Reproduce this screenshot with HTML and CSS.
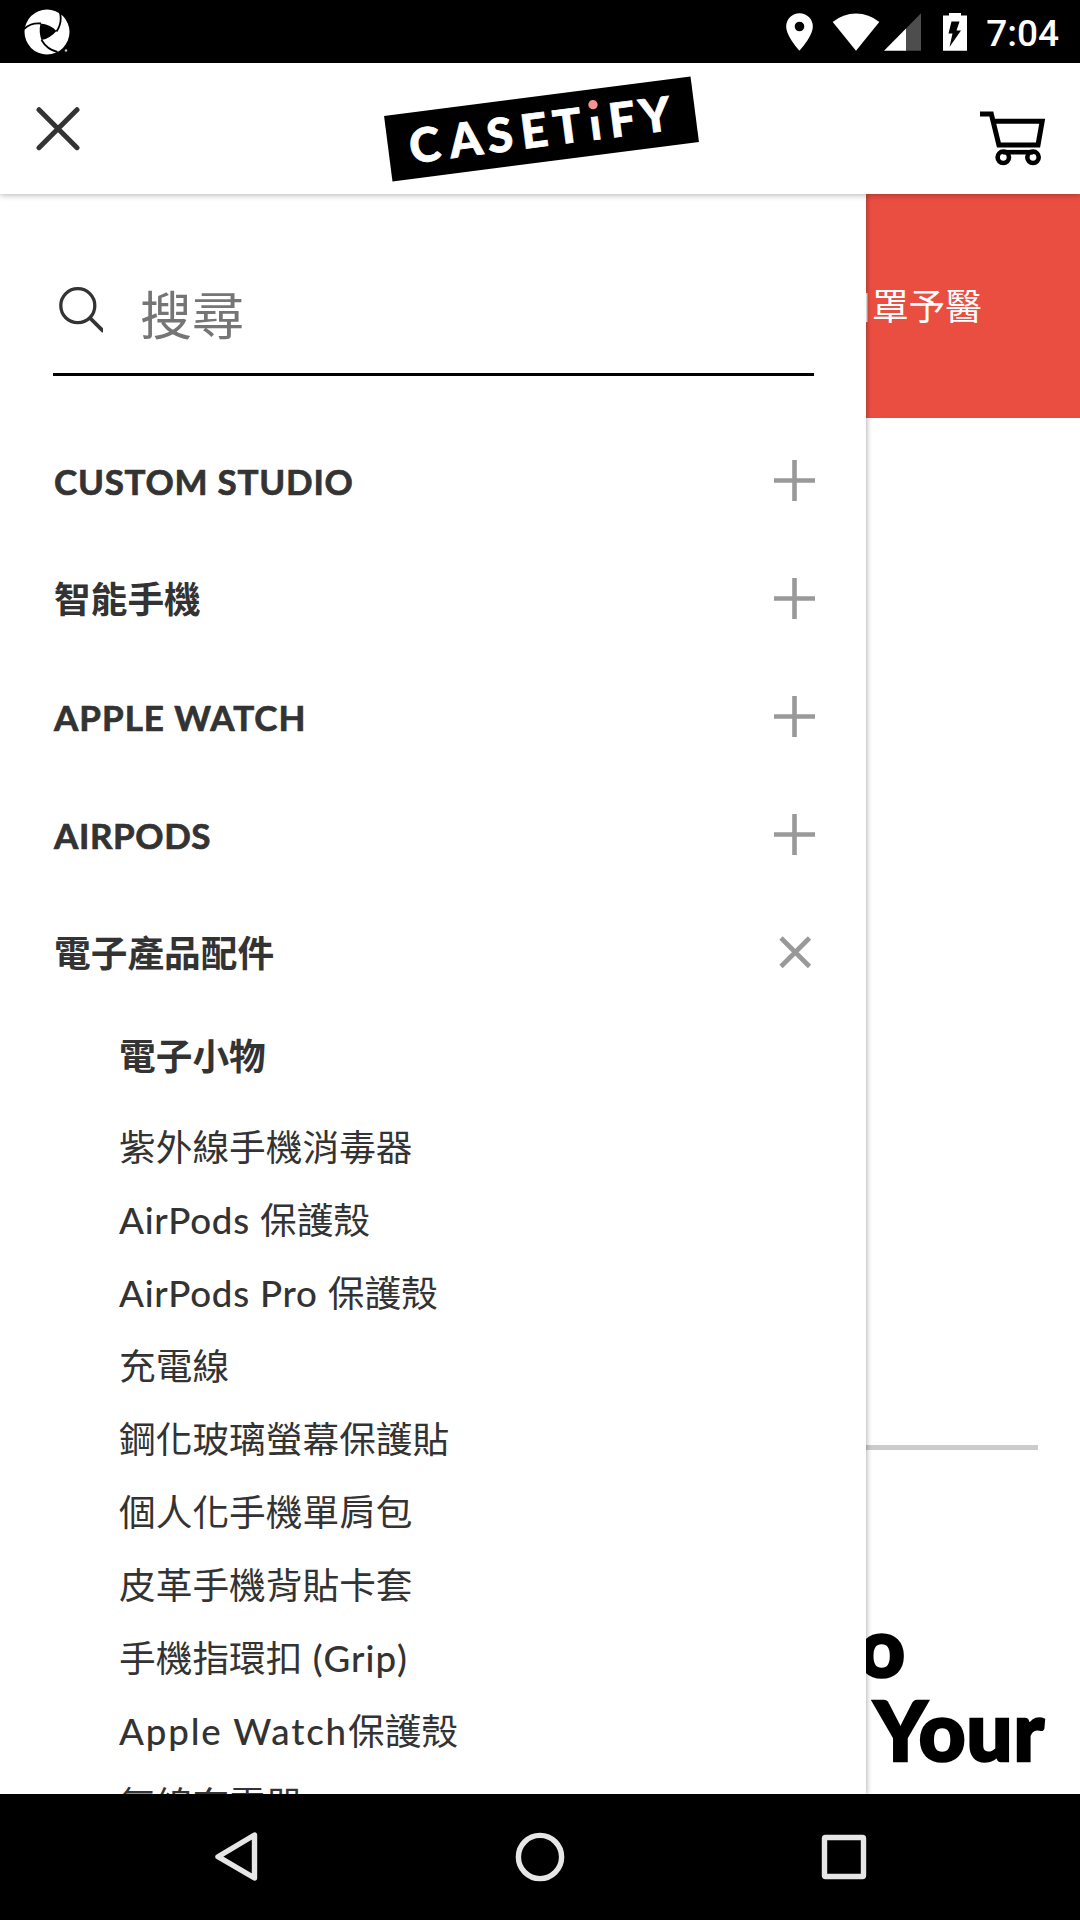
FILE: index.html
```html
<!DOCTYPE html>
<html lang="zh-Hant">
<head>
<meta charset="utf-8">
<title>CASETiFY</title>
<link rel="stylesheet" href="styles.css">
</head>
<body>
<div class="screen">
  <div class="status">
    <svg class="status-app" width="46" height="46" viewBox="0 0 46 46">
      <circle cx="23" cy="23" r="22.5" fill="#fff"/>
      <path d="M16.500 14.500Q26 15 32.500 22Q26 29.500 17.500 31Q14.500 23 16.500 14.500Z" fill="#000"/>
      <path d="M0 20Q7 13.500 17 14.500M35.500 2Q39 13 32.500 22.500M17.500 31Q23 40.500 33.500 43" fill="none" stroke="#000" stroke-width="1.800"/>
      <circle cx="42" cy="41.500" r="1.200" fill="#ccc"/>
    </svg>
    <div class="status-right">
      <svg width="182" height="38" viewBox="785 12.500 182 38">
        <path fill="#fff" fill-rule="evenodd" d="M799.500 12.700a13.300 13.300 0 0 0-13.300 13.300c0 10 13.300 24.200 13.300 24.200s13.300-14.200 13.300-24.200a13.300 13.300 0 0 0-13.300-13.300zm0 8.500a4.800 4.800 0 1 1 0 9.600a4.800 4.800 0 0 1 0-9.600z"/>
        <path fill="#fff" d="M832.700 21.500Q843 13 856 13T879.300 21.500L856 50.200Z"/>
        <path fill="#4d4d4d" d="M906 28v22.200h15V12.700z"/>
        <path fill="#fff" d="M884 50.200h22V28z"/>
        <path fill="#fff" d="M949 12.300h12v2.700h6v35.200h-24V15h6z"/>
        <path fill="#000" d="M951.500 21h8l-3 9h4.500l-11.500 16.500 3-13.500h-4z"/>
      </svg>
      <span class="clock">7:04</span>
    </div>
  </div>

  <header class="header">
    <svg class="close" width="44" height="44" viewBox="36 107 44 44"><path d="M39 109.700L77 147.700M77 109.700L39 147.700" stroke="#333" stroke-width="5" stroke-linecap="round"/></svg>
    <div class="logo">
      <svg width="309" height="66" viewBox="-154 -33 309 66">
        <g class="logo-text">
          <text y="17.500" x="-117.300 -76.200 -41.700 -7.100 26.600 54.300 81.600 114.700">CASET<tspan class="logo-i">i</tspan>FY</text>
        </g>
        <rect x="46" y="-24" width="17" height="18" fill="#000"/>
        <circle cx="54.700" cy="-17.600" r="4.700" fill="#f79292"/>
      </svg>
    </div>
    <svg class="cart" width="66" height="56" viewBox="980 110 66 56" fill="none" stroke="#000">
      <path stroke-width="5" d="M980 114H991.300L998.900 145H1038L1042.200 121.300H993"/>
      <g stroke-width="4.600"><circle cx="1003.300" cy="157.300" r="5.700"/><circle cx="1033" cy="157.300" r="5.700"/><path d="M1003 152.200H1033"/></g>
    </svg>
  </header>

  <div class="stage">
    <main class="page">
      <div class="banner">口罩予醫</div>
      <hr class="rule">
      <h1 class="headline"><span class="line-one">o</span><span>Your</span></h1>
    </main>

    <nav class="drawer">
      <div class="search">
        <svg width="50" height="50" viewBox="53 283 50 50" fill="none" stroke="#333" stroke-linecap="round"><circle cx="77.800" cy="305.700" r="17" stroke-width="3.300"/><path stroke-width="3.800" d="M90.500 318.500L102.500 330.500"/></svg>
        <span>搜尋</span>
      </div>
      <ul class="menu">
        <li><span class="caps caps-studio">CUSTOM STUDIO</span><svg class="plus" viewBox="0 0 41 41"><path d="M20.500 0V41M0 20.500H41"/></svg></li>
        <li><span>智能手機</span><svg class="plus" viewBox="0 0 41 41"><path d="M20.500 0V41M0 20.500H41"/></svg></li>
        <li><span class="caps caps-watch">APPLE WATCH</span><svg class="plus" viewBox="0 0 41 41"><path d="M20.500 0V41M0 20.500H41"/></svg></li>
        <li><span class="caps caps-pods">AIRPODS</span><svg class="plus" viewBox="0 0 41 41"><path d="M20.500 0V41M0 20.500H41"/></svg></li>
        <li><span>電子產品配件</span><svg class="plus" viewBox="0 0 41 41"><path d="M7 6L35.500 34.500M35.500 6L7 34.500"/></svg></li>
      </ul>
      <h2 class="sub-title">電子小物</h2>
      <ul class="sub">
        <li>紫外線手機消毒器</li>
        <li><span class="lat">AirPods </span>保護殼</li>
        <li><span class="lat">AirPods Pro </span>保護殼</li>
        <li>充電線</li>
        <li>鋼化玻璃螢幕保護貼</li>
        <li>個人化手機單肩包</li>
        <li>皮革手機背貼卡套</li>
        <li>手機指環扣<span class="lat lat-grip"> (Grip)</span></li>
        <li><span class="lat lat-watch">Apple Watch</span>保護殼</li>
        <li>無線充電器</li>
      </ul>
    </nav>
  </div>

  <div class="navbar">
    <svg width="50" height="54" viewBox="211 1830 50 54"><path d="M254.500 1835V1878L218 1856.700Z"/></svg>
    <svg width="54" height="54" viewBox="513 1830 54 54"><circle cx="540" cy="1857" r="21.600"/></svg>
    <svg width="50" height="54" viewBox="819 1830 50 54"><rect x="824.500" y="1837.500" width="39" height="39" rx="1"/></svg>
  </div>
</div>
</body>
</html>
```
FILE: styles.css
```css
* { box-sizing: border-box; }
body, h1, h2, ul { margin: 0; padding: 0; }
ul { list-style: none; }
svg { display: block; flex: none; }

.screen {
  width: 1080px;
  height: 1920px;
  display: flex;
  flex-direction: column;
  overflow: hidden;
  background: #fff;
  color: #333;
  font-family: Lato, "Noto Sans CJK SC", sans-serif;
  font-size: 36.7px;
}

.status {
  height: 63px;
  flex: none;
  padding: 0 21px 0 24px;
  display: flex;
  justify-content: space-between;
  align-items: center;
  background: #000;
}
.status-right { display: flex; align-items: center; gap: 19px; }
.clock {
  color: #fff;
  font: 500 37px/62px Roboto, sans-serif;
  padding-top: 4px;
}

.header {
  height: 131px;
  flex: none;
  padding: 0 34px 0 36px;
  display: grid;
  grid-template-columns: 1fr 309px 1fr;
  align-items: center;
  background: #fff;
  box-shadow: 0 1px 6px rgba(0, 0, 0, .3);
  z-index: 2;
}
.logo {
  height: 66px;
  background: #000;
  transform: rotate(-7.35deg);
}
.logo-text text {
  font: 900 47px Lato, sans-serif;
  fill: #fff;
  stroke: #fff;
  stroke-width: .8px;
  text-anchor: middle;
}
.logo-text .logo-i { font-size: 44px; }
.cart { justify-self: end; margin-top: 19px; }

.stage { position: relative; flex: 1; min-height: 0; overflow: hidden; }

.page { text-align: right; }
.banner {
  height: 224px;
  padding-right: 98px;
  background: #ea4e41;
  color: #fff;
  line-height: 224px;
}
.rule {
  height: 5px;
  margin: 1027px 42px 0;
  border: 0;
  background: #ccc;
}
.headline {
  margin-top: 154px;
  padding-right: 35px;
  display: flex;
  flex-direction: column;
  color: #000;
  font-size: 81px;
  font-weight: 900;
  letter-spacing: 1px;
  line-height: 84px;
  -webkit-text-stroke: 2.6px #000;
}
.line-one { padding-right: 139px; }

.drawer {
  position: absolute;
  inset: 0 auto 0 0;
  width: 865.5px;
  padding: 0 51.5px 0 53px;
  background: #fff;
  box-shadow: 1px 0 5px rgba(0, 0, 0, .3);
}
.search {
  height: 182px;
  padding-top: 60px;
  border-bottom: 3px solid #000;
  display: flex;
  align-items: center;
  gap: 37px;
  color: #757575;
  font-size: 52px;
}
.search svg { margin-top: -12px; }
.search span { margin-top: -3px; }

.menu { margin-top: 45px; font-weight: 700; }
.menu li {
  height: 118px;
  padding-left: 1px;
  display: flex;
  justify-content: space-between;
  align-items: center;
}
.menu span { margin-top: -3px; }
.plus {
  width: 41px;
  height: 41px;
  margin-right: -1px;
  fill: none;
  stroke: #999;
  stroke-width: 4.6;
}
.menu .caps {
  margin-top: 2px;
  font-size: 35px;
  -webkit-text-stroke: .7px #333;
}
.caps-studio { letter-spacing: .75px; }
.caps-watch { letter-spacing: 1px; }
.caps-pods { letter-spacing: .6px; }

.sub-title {
  margin-left: 66px;
  padding-top: 2px;
  font-size: 36.7px;
  line-height: 87px;
}
.sub { margin-top: 11px; margin-left: 66px; }
.sub li { height: 73px; line-height: 73px; white-space: pre; }
.lat { font-weight: 500; letter-spacing: .75px; }
.lat-grip { letter-spacing: 1px; }
.lat-watch { letter-spacing: 1.85px; }

.navbar {
  height: 126px;
  flex: none;
  padding: 0 211px;
  display: flex;
  justify-content: space-between;
  align-items: center;
  background: #000;
}
.navbar svg {
  fill: none;
  stroke: #e6e6e6;
  stroke-width: 5.4;
  stroke-linejoin: round;
}
```
